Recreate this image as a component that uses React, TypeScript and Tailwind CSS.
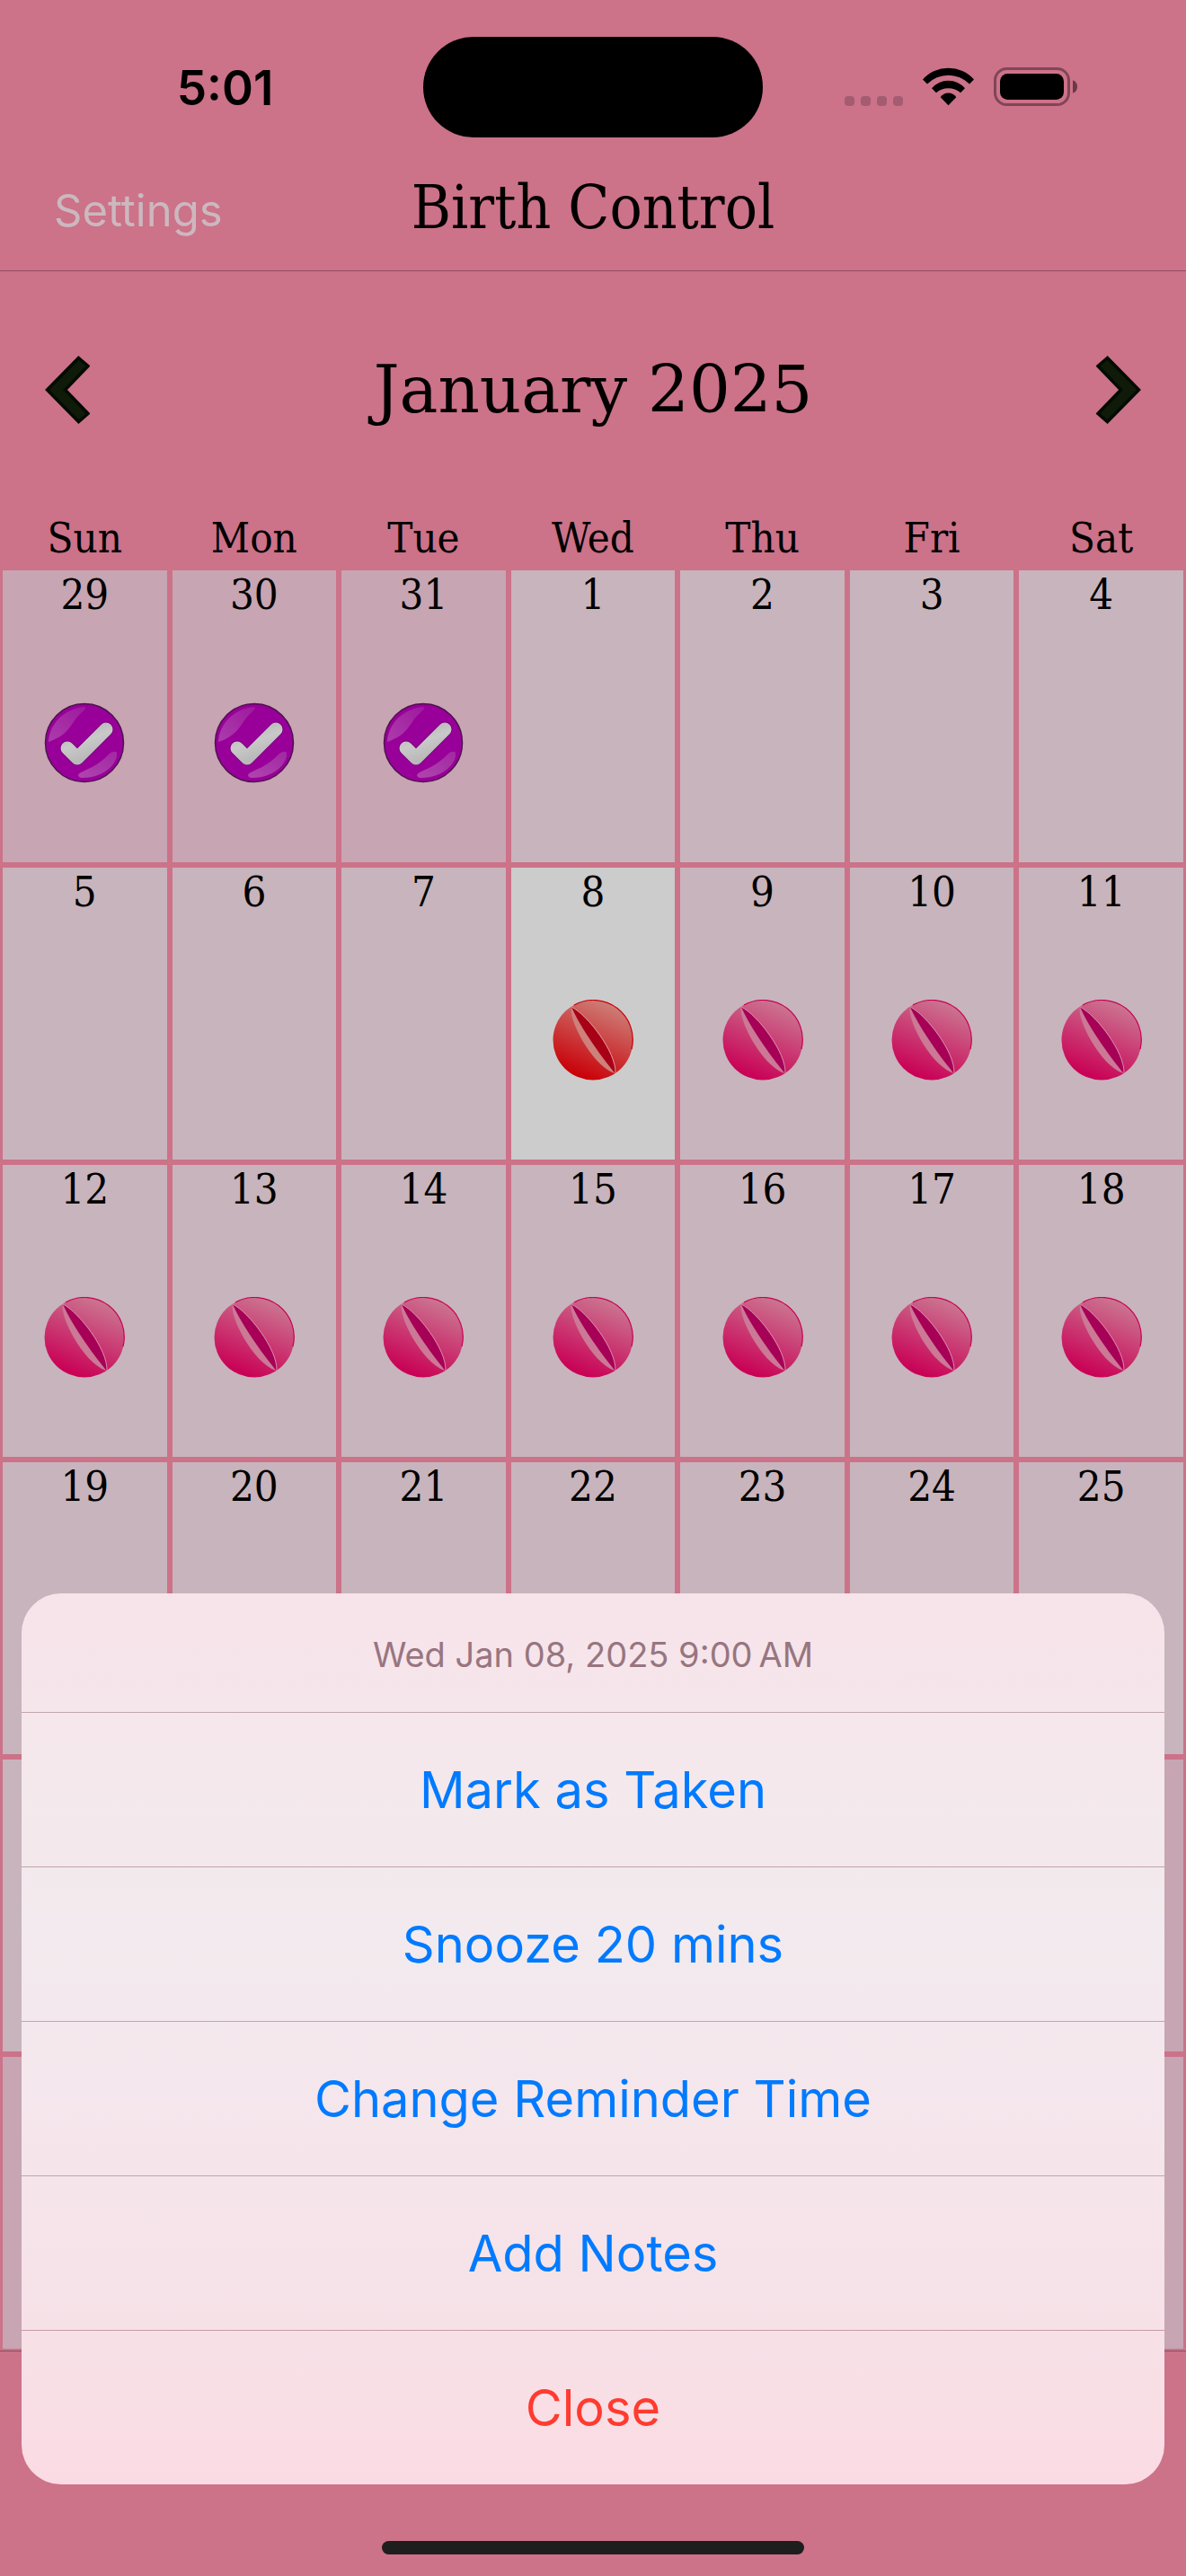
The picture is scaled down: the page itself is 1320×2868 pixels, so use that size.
type DayStatus = "taken" | "due" | "upcoming";

type Day = {
  date: number;
  inMonth: boolean;
  status?: DayStatus;
};

const WEEKDAYS = ["Sun", "Mon", "Tue", "Wed", "Thu", "Fri", "Sat"];

const TODAY = 8;

// Weeks from this index on lie fully behind the open action sheet.
const FIRST_COVERED_WEEK = 4;

const ACTIONS = ["Mark as Taken", "Snooze 20 mins", "Change Reminder Time", "Add Notes"];

function statusFor(offset: number): DayStatus | undefined {
  if (offset <= 0) return "taken";
  if (offset === TODAY) return "due";
  return offset > TODAY ? "upcoming" : undefined;
}

// January 2025 starts on a Wednesday, so the grid opens with Dec 29.
const WEEKS: Day[][] = Array.from({ length: 6 }, (_, week) =>
  Array.from({ length: 7 }, (_, weekday) => {
    const offset = week * 7 + weekday - 2;
    const date = offset <= 0 ? offset + 31 : offset > 31 ? offset - 31 : offset;
    return { date, inMonth: offset > 0 && offset <= 31, status: statusFor(offset) };
  }),
);

function WifiIcon() {
  return (
    <svg viewBox="0 0 57 43" className="h-[43px] w-[57px]" aria-hidden="true">
      <path d="M0 13.500A38 38 0 0 1 57 13.500L52 18.500A33 33 0 0 0 5 18.500Z" />
      <path d="M10 23.300A24.200 24.200 0 0 1 47 23.300L42 28.300A20.700 20.700 0 0 0 15 28.300Z" />
      <path d="M19.700 33.300A10.500 10.500 0 0 1 37.300 33.300L28.500 42.200Z" />
    </svg>
  );
}

function BatteryIcon() {
  return (
    <svg viewBox="0 0 94 43" className="h-[43px] w-[94px]" aria-hidden="true">
      <rect x="1.500" y="1.500" width="82" height="40" rx="13" fill="none" stroke="#7f4656" strokeWidth="3" />
      <rect x="7" y="7" width="71" height="29" rx="8.500" />
      <path d="M88 14.500C91 15 93 18 93 21.500S91 28 88 28.500Z" fill="#693a47" />
    </svg>
  );
}

function ChevronIcon({ flipped = false }: { flipped?: boolean }) {
  return (
    <svg
      viewBox="0 0 50 76"
      className={flipped ? "h-[76px] w-[50px] -scale-x-100" : "h-[76px] w-[50px]"}
      aria-hidden="true"
    >
      <path
        d="M37.500 2.500L48 11.500L22.500 38L48 64.500L37.500 73.500L2.500 38Z"
        fill="#101a08"
        stroke="#030b04"
        strokeWidth="3.500"
      />
    </svg>
  );
}

function TakenIcon() {
  return (
    <svg viewBox="0 0 90 90" className="size-[90px]" role="img" aria-label="Taken">
      <defs>
        <linearGradient id="gloss-top" x1="0" y1="1" x2="1" y2="0">
          <stop offset="0" stopColor="#b04cb0" />
          <stop offset="1" stopColor="#a01fa0" />
        </linearGradient>
        <linearGradient id="gloss-bottom" x1="0" y1="1" x2="1" y2="0">
          <stop offset="0" stopColor="#ae46ae" />
          <stop offset="1" stopColor="#a228a2" />
        </linearGradient>
        <linearGradient id="tick" x1="0" y1="0" x2="0.500" y2="1">
          <stop offset="0" stopColor="#b4b4b4" />
          <stop offset="0.500" stopColor="#c9c9c9" />
          <stop offset="1" stopColor="#b9b9b9" />
        </linearGradient>
      </defs>
      <circle cx="45" cy="45" r="43.500" fill="#990099" stroke="#4d1250" strokeWidth="1.500" />
      <path d="M5 44C6 24 22 7 45 5C49 6 42 11 38 15C29 25 28 36 5 44Z" fill="url(#gloss-top)" opacity="0.800" />
      <path d="M81 56C83 66 68 85 41 84C36 82 38 79 43 77C56 71 62 68 72 58C76 54 80 54 81 56Z" fill="url(#gloss-bottom)" />
      <path d="M26 51L37 62L69 30" fill="none" stroke="#6f0070" strokeWidth="17" strokeLinecap="round" strokeLinejoin="round" opacity="0.600" />
      <path d="M26 51L37 62L69 30" fill="none" stroke="url(#tick)" strokeWidth="15" strokeLinecap="round" strokeLinejoin="round" />
    </svg>
  );
}

function PillIcon({ due = false }: { due?: boolean }) {
  const id = due ? "pill-due" : "pill-upcoming";
  const base = due ? "#c90008" : "#c90055";
  const light = due ? "#cd7d76" : "#cb7490";

  return (
    <svg viewBox="0 0 90 90" className="size-[90px]" role="img" aria-label={due ? "Due" : "Upcoming"}>
      <defs>
        <linearGradient id={id} x1="0.320" y1="0.950" x2="0.700" y2="0.050">
          <stop offset="0" stopColor={base} />
          <stop offset="1" stopColor={light} />
        </linearGradient>
      </defs>
      <circle cx="45" cy="45" r="44.500" fill={`url(#${id})`} />
      <path d="M24 6A44 44 0 0 1 88 55" fill="none" stroke={base} strokeWidth="1.200" />
      <path d="M21 8C17 20 42 72 69 82Z" fill={due ? "#ce807b" : "#cc7996"} />
      <path d="M21 8C38 17 70 58 70 82C60 72 30 30 21 8Z" fill={due ? "#a80016" : "#a60057"} />
      <path d="M21 8C39 17 71 58 70 82" fill="none" stroke={due ? "#dc9a98" : "#d78bab"} strokeWidth="1" />
    </svg>
  );
}

function DayCell({ day, covered }: { day: Day; covered: boolean }) {
  const isToday = day.status === "due";
  const color = isToday ? "bg-[#cccccc]" : day.inMonth ? "bg-[#c8b4bc]" : "bg-[#c7a5b2]";

  return (
    <td className="p-0">
      <button type="button" className={`flex h-[325px] w-full flex-col items-center ${color}`}>
        {!covered && (
          <>
            <span className="h-[54px] text-[47px] leading-[54px]">{day.date}</span>
            <span className="mt-[93px] h-[90px]">
              {day.status === "taken" && <TakenIcon />}
              {day.status === "due" && <PillIcon due />}
              {day.status === "upcoming" && <PillIcon />}
            </span>
          </>
        )}
      </button>
    </td>
  );
}

function StatusBar() {
  return (
    <div className="grid h-[194px] grid-cols-[1fr_378px_1fr] pt-[41px]">
      <time className="pt-[30px] pl-[30px] text-center font-[Inter,sans-serif] text-[53px] leading-[54px] font-semibold">
        5:01
      </time>
      <div className="h-[112px] rounded-full bg-black" />
      <div className="mt-[34px] flex h-[43px] items-end justify-end gap-[22px] pr-[120px]">
        <div className="flex gap-[7px]">
          {[0, 1, 2, 3].map((dot) => (
            <span key={dot} className="size-[11px] rounded-[4px] bg-[#a35c70]" />
          ))}
        </div>
        <WifiIcon />
        <BatteryIcon />
      </div>
    </div>
  );
}

function ActionSheet() {
  return (
    <div
      role="dialog"
      aria-label="Reminder actions"
      className="absolute inset-x-6 bottom-[102px] overflow-hidden rounded-[44px] bg-[linear-gradient(#f7e3ea,#f4e8ec_20%,#f2eaee_38%,#f5e6ec_60%,#f6e2e8_80%,#fbdbe3)] text-center font-[Inter,sans-serif]"
    >
      <p className="h-[132px] pt-[44px] text-[38px] leading-[48px] text-[#987580]">
        Wed Jan 08, 2025 9:00&#8239;AM
      </p>
      {ACTIONS.map((action) => (
        <button
          key={action}
          type="button"
          className="block h-[172px] w-full border-t border-[#c0a5af] text-[56px] leading-[72px] text-[#007aff]"
        >
          {action}
        </button>
      ))}
      <button
        type="button"
        className="block h-[172px] w-full border-t border-[#c99aaa] text-[56px] leading-[72px] text-[#ff3b30]"
      >
        Close
      </button>
    </div>
  );
}

export default function App() {
  return (
    <div className="relative min-h-screen bg-[#cc7289] font-['DejaVu_Serif_Condensed','DejaVu_Serif',serif] text-black">
      <StatusBar />

      <header className="grid h-[108px] grid-cols-[1fr_auto_1fr] border-b border-[#944b60]">
        <a href="#settings" className="pt-[11px] pl-[60px] font-[Inter,sans-serif] text-[49px] leading-[60px] text-[#ccb8bf]">
          Settings
        </a>
        <h1 className="text-[67px] leading-[74px]">Birth Control</h1>
      </header>

      <main className="border-b border-[#8d4c5f]">
        <div className="flex h-[264px] items-center justify-between px-[50px]">
          <button type="button" aria-label="Previous month">
            <ChevronIcon />
          </button>
          <h2 className="font-['DejaVu_Serif',serif] text-[72px] leading-[84px]">January 2025</h2>
          <button type="button" aria-label="Next month">
            <ChevronIcon flipped />
          </button>
        </div>

        <table className="w-full table-fixed border-separate border-spacing-0">
          <thead>
            <tr>
              {WEEKDAYS.map((weekday) => (
                <th key={weekday} scope="col" className="h-[69px] p-0 pb-1 text-[47px] leading-[54px] font-normal">
                  {weekday}
                </th>
              ))}
            </tr>
          </thead>
          <tbody>
            {WEEKS.map((week, index) => (
              <tr
                key={index}
                className="[&>td]:border-x-3 [&>td]:border-b-6 [&>td]:border-[#cc7289] last:[&>td]:border-b-2"
              >
                {week.map((day) => (
                  <DayCell key={day.date} day={day} covered={index >= FIRST_COVERED_WEEK} />
                ))}
              </tr>
            ))}
          </tbody>
        </table>
      </main>

      <ActionSheet />
      <div className="absolute bottom-6 left-1/2 h-[15px] w-[470px] -translate-x-1/2 rounded-full bg-[#1e1e1e]" />
    </div>
  );
}
